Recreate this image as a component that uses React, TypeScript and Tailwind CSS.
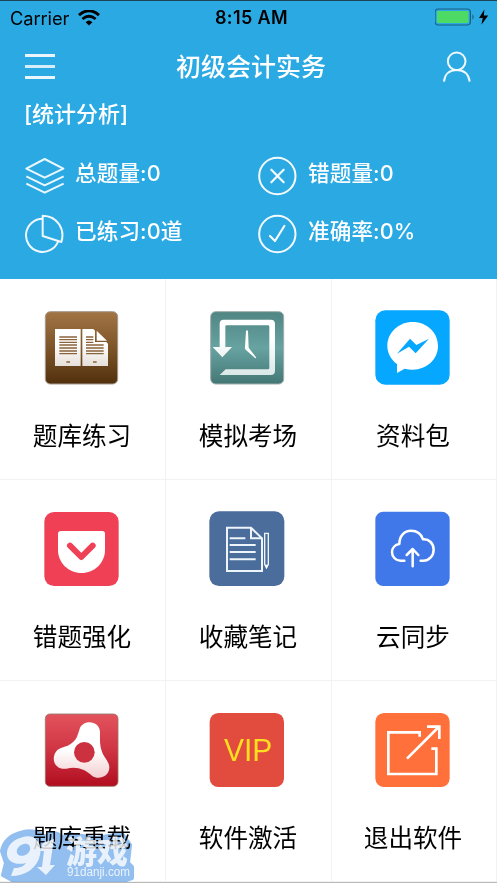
import React from "react";

const FONT = "font-['Inter','Noto_Sans_CJK_SC',sans-serif] [font-feature-settings:'calt'_0]";

function StatusBar() {
  return (
    <div className="flex h-[34px] items-center px-[10px] text-black">
      <div className="flex flex-1 items-center gap-[9px]">
        <span className="text-[18.3px] leading-[34px] tracking-[-0.1px]">Carrier</span>
        <svg width="22" height="16" viewBox="0 0 22 16" fill="none" stroke="#000">
          <path d="M1 5.2Q11-3.6 21 5.2" strokeWidth="2.9" />
          <path d="M4.4 9.1Q11 3.4 17.6 9.1" strokeWidth="2.7" />
          <path d="M7.6 12.2Q11 8.8 14.4 12.2L11 15.6Z" fill="#000" stroke="none" />
        </svg>
      </div>
      <span className="pl-[3px] text-[18px] font-semibold leading-[34px] tracking-[0.4px]">8:15 AM</span>
      <div className="-mr-[3px] flex flex-1 items-center justify-end pb-[2px]">
        <svg width="55" height="20" viewBox="0 0 55 20">
          <rect x="0" y="2" width="35.4" height="16" rx="3.2" fill="none" stroke="#1b5f80" strokeWidth="1.2" />
          <rect x="2" y="4" width="31.5" height="12" rx="1.4" fill="#4cd964" />
          <path d="M37.4 7.3Q40 10 37.4 12.7Z" fill="#1b5f80" />
          <path d="M49.4 2.4L44 11H47.8L46.4 17.8L53.2 8.6H48.8Z" fill="#000" />
        </svg>
      </div>
    </div>
  );
}

function LayersIcon() {
  return (
    <svg width="40" height="40" viewBox="75 48 120 120" fill="none" stroke="#fff" strokeWidth="6" strokeOpacity=".9" strokeLinejoin="round">
      <path d="M79 86L134 57L190 86L134 113Z" />
      <path d="M79 109L134 136L191 109M79 131L134 158L191 131" />
    </svg>
  );
}

function PieIcon() {
  return (
    <svg width="40" height="40" viewBox="75 222 120 120" fill="none" stroke="#fff" strokeWidth="6" strokeOpacity=".92" strokeLinejoin="round">
      <path d="M128 236A50 50 0 1 0 175 303" />
      <path d="M128 227V288L184 306C196 268 173 228 128 227Z" />
    </svg>
  );
}

function WrongIcon() {
  return (
    <svg width="40" height="40" viewBox="33 48 120 120" fill="none" stroke="#fff" strokeWidth="6" strokeOpacity=".95" strokeLinecap="round">
      <circle cx="91" cy="108" r="54.5" />
      <path d="M73 89L110 127M110 89L73 127" strokeWidth="6.5" />
    </svg>
  );
}

function RightIcon() {
  return (
    <svg width="40" height="40" viewBox="33 222 120 120" fill="none" stroke="#fff" strokeWidth="6" strokeOpacity=".95" strokeLinecap="round" strokeLinejoin="round">
      <circle cx="91" cy="282" r="54.5" />
      <path d="M69 288L84 303L112 258" strokeWidth="6.5" />
    </svg>
  );
}

function Stat({ icon, text }: { icon: React.ReactNode; text: string }) {
  return (
    <div className="flex h-[58px] items-start gap-[10px]">
      {icon}
      <span className="text-[21.6px] font-medium leading-[34px] tracking-[0.1px]">{text}</span>
    </div>
  );
}

const ICON = "h-[76px] w-[76px] shrink-0 overflow-visible";

function BookIcon() {
  return (
    <svg className={ICON} viewBox="42 30 228 228">
      <defs>
        <linearGradient id="brown" x1="0" y1="0" x2="0" y2="1">
          <stop offset="0" stopColor="#a27445" />
          <stop offset=".5" stopColor="#7d5529" />
          <stop offset="1" stopColor="#52300d" />
        </linearGradient>
        <linearGradient id="page" x1="0" y1="0" x2="0" y2="1">
          <stop offset=".4" stopColor="#fff" />
          <stop offset="1" stopColor="#e6dfd9" />
        </linearGradient>
      </defs>
      <rect x="46" y="35" width="217" height="217" rx="15" fill="url(#brown)" stroke="#a59a90" strokeWidth="3" />
      <path d="M75 87H152V198H75Z" fill="url(#page)" />
      <path d="M157 87H190L195 92V126H229L234 131V198H157Z" fill="url(#page)" />
      <path d="M200 92L231 122H200Z" fill="#fff" />
      <g stroke="#8b643c" strokeWidth="4">
        <path d="M88 111H141M88 119H141M88 127H141M88 135H141M88 144H141M88 153H141M88 161H141" />
        <path d="M168 111H190M168 119H190M168 127H190M168 135H221M168 144H221M168 153H221M168 161H221" />
        <path d="M109 186H120M189 186H200" strokeWidth="5" />
      </g>
    </svg>
  );
}

function HistoryIcon() {
  return (
    <svg className={ICON} viewBox="45 30 228 228">
      <defs>
        <linearGradient id="teal" x1="0" y1="0" x2="0" y2="1">
          <stop offset="0" stopColor="#4f8583" />
          <stop offset=".5" stopColor="#67a3a1" />
          <stop offset="1" stopColor="#437775" />
        </linearGradient>
        <linearGradient id="frame" x1="0" y1="0" x2="0" y2="1">
          <stop offset=".35" stopColor="#fff" />
          <stop offset="1" stopColor="#dbe8e8" />
        </linearGradient>
      </defs>
      <rect x="47" y="35" width="219" height="217" rx="15" fill="url(#teal)" stroke="#a1adab" strokeWidth="3" />
      <path d="M74 141V71Q74 59 86 59H227Q240 59 240 72V212Q240 225 227 225H74L92 208H219Q223 208 223 204V80Q223 76 219 76H95Q91 76 91 80V141H111L82 172L53 141Z" fill="url(#frame)" />
      <path d="M153 93Q156 89 159 93L161 143L184 173L181 175L152 149Q149 146 150 140Z" fill="#fff" />
    </svg>
  );
}

function MessengerIcon() {
  return (
    <svg className={ICON} viewBox="45 30 228 228">
      <rect x="46" y="31" width="223" height="223" rx="30" fill="#06a7ff" />
      <path d="M158 66C116 66 82 98 82 138C82 160 94 180 111 192V219L134 206Q147 209 158 209C201 209 234 177 234 138C234 98 201 66 158 66Z" fill="#fff" />
      <path d="M111 161L150 116L169 135L207 116L167 160L147 140Z" fill="#06a7ff" />
    </svg>
  );
}

function PocketIcon() {
  return (
    <svg className={ICON} viewBox="42 33 228 228">
      <rect x="43" y="36" width="223" height="222" rx="29" fill="#ef4056" />
      <path d="M93 93H217Q225 93 225 101V150C225 189 193 219 154.500 219C116 219 84 189 84 150V101Q84 93 93 93Z" fill="#fff" />
      <path d="M120 137L154 171L188 137" fill="none" stroke="#ef4056" strokeWidth="18" strokeLinecap="round" strokeLinejoin="round" />
    </svg>
  );
}

function NotesIcon() {
  return (
    <svg className={ICON} viewBox="45 33 228 228">
      <rect x="43" y="34" width="225" height="224" rx="29" fill="#4a6d9b" />
      <g fill="none" stroke="#edf5fa" strokeWidth="6">
        <path d="M96 83H168L201 115V213H96Z" />
        <path d="M168 83V115H201" />
        <path d="M104 115H151M104 135H182M104 156H182M104 178H182" />
        <path d="M209 100H220V193L214.500 203L209 193Z" strokeWidth="4" />
      </g>
      <path d="M209 194H220L214.500 208Z" fill="#fff" />
    </svg>
  );
}

function CloudIcon() {
  return (
    <svg className={ICON} viewBox="45 33 228 228">
      <rect x="46" y="35" width="223" height="223" rx="24" fill="#4078ea" />
      <g fill="none" stroke="#fff" strokeWidth="7.5" strokeLinecap="round" strokeLinejoin="round">
        <path d="M133 182H122C106 182 96 169 96 157C96 144 105 134 118 132C118 108 133 92 153 92C171 92 184 102 189 118C207 116 221 131 221 149C221 168 206 182 190 182H182" />
        <path d="M158 199V148M140 165L158 147L175 165" />
      </g>
    </svg>
  );
}

function AirIcon() {
  return (
    <svg className={ICON} viewBox="132 36 228 228">
      <defs>
        <linearGradient id="red" x1="0" y1="0" x2="0" y2="1">
          <stop offset="0" stopColor="#e3535c" />
          <stop offset=".5" stopColor="#cf3443" />
          <stop offset="1" stopColor="#b10e20" />
        </linearGradient>
        <linearGradient id="blob" x1="0" y1="0" x2="0" y2="1">
          <stop offset=".5" stopColor="#fff" />
          <stop offset="1" stopColor="#f4cfd1" />
        </linearGradient>
      </defs>
      <rect x="136" y="42" width="218" height="217" rx="14" fill="url(#red)" stroke="#96766f" strokeWidth="2.5" />
      <path d="M238 90C245 57 300 59 300 97C300 124 298 145 314 171C323 184 328 192 328 203C327 230 295 241 276 227C252 207 232 199 199 206C163 211 153 175 168 155C177 143 191 143 207 135C231 122 232 107 238 90Z" fill="url(#blob)" />
      <circle cx="253" cy="157" r="31" fill="#cc3140" />
    </svg>
  );
}

function VipIcon() {
  return (
    <svg className={ICON} viewBox="60 36 228 228">
      <rect x="59" y="39" width="223" height="222" rx="26" fill="#e24c3f" />
      <text x="102" y="184" fontSize="93" textLength="145" lengthAdjust="spacingAndGlyphs" fill="#ffdf20" className="font-['Liberation_Sans',sans-serif]">VIP</text>
    </svg>
  );
}

function ExitIcon() {
  return (
    <svg className={ICON} viewBox="555 36 228 228">
      <rect x="556" y="39" width="223" height="222" rx="26" fill="#ff703b" />
      <g fill="none" stroke="#fff" strokeWidth="8">
        <path d="M689 110V97H595V222H739V146H724" />
        <path d="M651 176L746 81M711 80H748V117" />
      </g>
    </svg>
  );
}

const items = [
  { label: "题库练习", icon: <BookIcon /> },
  { label: "模拟考场", icon: <HistoryIcon /> },
  { label: "资料包", icon: <MessengerIcon /> },
  { label: "错题强化", icon: <PocketIcon /> },
  { label: "收藏笔记", icon: <NotesIcon /> },
  { label: "云同步", icon: <CloudIcon /> },
  { label: "题库重载", icon: <AirIcon /> },
  { label: "软件激活", icon: <VipIcon /> },
  { label: "退出软件", icon: <ExitIcon /> },
];

function Watermark() {
  return (
    <>
      <svg className="absolute bottom-0 left-0 mix-blend-multiply" width="140" height="58" viewBox="0 0 140 58">
        <path d="M20 8C30 4 40 7 45 12C52 6 58 8 63 13L68 9L96 13L122 9L130 20L128 38L132 42V53L126 55H12L3 50L6 38L2 26C4 16 10 11 20 8Z" fill="#92bff0" stroke="#92bff0" strokeWidth="4" strokeLinejoin="round" />
      </svg>
      <svg className="absolute bottom-0 left-0 opacity-80" width="140" height="58" viewBox="0 0 140 58" fill="#fff">
        <path fillRule="evenodd" d="M23 12C34 9 43 17 40 30C37 43 26 51 11 51L14 43C20 43 24 41 26 38C15 41 6 36 7 27C8 19 15 14 23 12ZM24 19C19 20 16 24 17 28C19 33 28 31 30 25C31 21 28 18 24 19Z" />
        <path d="M43 18L54 14L50 40H55L46 50L37 42H42L44 26H40Z" />
        <text x="66" y="38" fontSize="31" fontWeight="900" className="font-['Noto_Sans_CJK_SC',sans-serif]">游戏</text>
        <text x="67" y="51" fontSize="12" textLength="63" lengthAdjust="spacingAndGlyphs" className="font-['Liberation_Sans',sans-serif]">91danji.com</text>
      </svg>
    </>
  );
}

export default function App() {
  return (
    <div className={`relative flex h-[883px] w-[497px] flex-col overflow-hidden bg-white ${FONT}`}>
      <header className="h-[279px] border-t border-[#1d4358] bg-[#2ba9e3] text-white">
        <StatusBar />
        <div className="flex h-[63px] items-center justify-between px-[25px]">
          <div className="flex w-[30px] flex-col gap-[8px]">
            <span className="h-[3px] bg-white/90" />
            <span className="h-[3px] bg-white/80" />
            <span className="h-[3px] bg-white/90" />
          </div>
          <h1 className="pl-[5px] text-[25px] font-medium leading-[34px]">初级会计实务</h1>
          <svg width="30" height="32" viewBox="585 150 90 96" fill="none" stroke="#fff" strokeWidth="6" strokeOpacity=".92">
            <circle cx="629" cy="181" r="26.500" />
            <path d="M591 242C593 219 608 207 629 207C650 207 665 219 668 242" />
          </svg>
        </div>
        <p className="h-[58px] pl-[24px] pt-[2px] text-[22px] font-medium leading-[28px]">[统计分析]</p>
        <div className="grid grid-cols-[233px_1fr] pl-[25px]">
          <Stat icon={<LayersIcon />} text="总题量:0" />
          <Stat icon={<WrongIcon />} text="错题量:0" />
          <Stat icon={<PieIcon />} text="已练习:0道" />
          <Stat icon={<RightIcon />} text="准确率:0%" />
        </div>
      </header>
      <main className="grid h-[604px] grid-cols-[166px_166px_165px] grid-rows-[201px_201px_201px] border-b border-[#b9b9b9] text-black">
        {items.map((item) => (
          <div key={item.label} className="flex flex-col items-center border-r border-b border-[#f2f2f2] pr-px pt-[31px] nth-[3n]:pr-[2px]">
            {item.icon}
            <span className="mt-[32px] text-[24.600px] leading-[36px]">{item.label}</span>
          </div>
        ))}
      </main>
      <Watermark />
    </div>
  );
}
